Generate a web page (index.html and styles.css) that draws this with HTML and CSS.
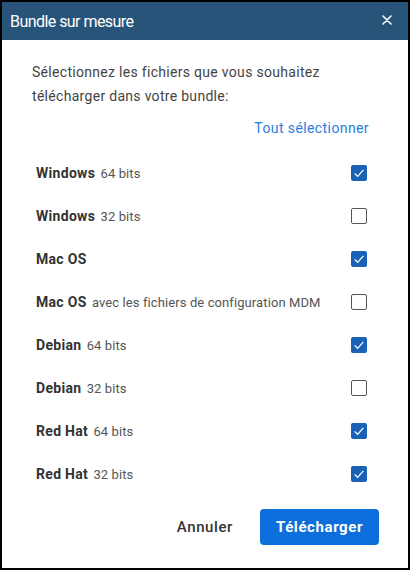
FILE: index.html
```html
<!DOCTYPE html>
<html lang="fr">
<head>
<meta charset="utf-8">
<title>Bundle sur mesure</title>
<link rel="stylesheet" href="styles.css">
</head>
<body>
<div class="dialog">
  <div class="header">
    <span class="title">Bundle sur mesure</span>
    <svg class="close" width="10" height="10" viewBox="0 0 10 10"><path d="M1 1 L9 9 M9 1 L1 9" stroke="#fff" stroke-width="1.6" stroke-linecap="round"/></svg>
  </div>
  <div class="content">
    <p class="intro">Sélectionnez les fichiers que vous souhaitez télécharger dans votre bundle:</p>
    <div class="select-all"><span class="link">Tout sélectionner</span></div>
    <ul class="list">
      <li class="row"><span class="label"><b>Windows</b> 64 bits</span><span class="box checked"><svg viewBox="0 0 16 16" width="16" height="16"><path d="M3.6 8.4 L6.6 11.3 L12.4 4.8" fill="none" stroke="#fff" stroke-width="1.2"/></svg></span></li>
      <li class="row"><span class="label"><b>Windows</b> 32 bits</span><span class="box"></span></li>
      <li class="row"><span class="label"><b>Mac OS</b></span><span class="box checked"><svg viewBox="0 0 16 16" width="16" height="16"><path d="M3.6 8.4 L6.6 11.3 L12.4 4.8" fill="none" stroke="#fff" stroke-width="1.2"/></svg></span></li>
      <li class="row"><span class="label"><b>Mac OS</b> avec les fichiers de configuration MDM</span><span class="box"></span></li>
      <li class="row"><span class="label"><b>Debian</b> 64 bits</span><span class="box checked"><svg viewBox="0 0 16 16" width="16" height="16"><path d="M3.6 8.4 L6.6 11.3 L12.4 4.8" fill="none" stroke="#fff" stroke-width="1.2"/></svg></span></li>
      <li class="row"><span class="label"><b>Debian</b> 32 bits</span><span class="box"></span></li>
      <li class="row"><span class="label"><b>Red Hat</b> 64 bits</span><span class="box checked"><svg viewBox="0 0 16 16" width="16" height="16"><path d="M3.6 8.4 L6.6 11.3 L12.4 4.8" fill="none" stroke="#fff" stroke-width="1.2"/></svg></span></li>
      <li class="row"><span class="label"><b>Red Hat</b> 32 bits</span><span class="box checked"><svg viewBox="0 0 16 16" width="16" height="16"><path d="M3.6 8.4 L6.6 11.3 L12.4 4.8" fill="none" stroke="#fff" stroke-width="1.2"/></svg></span></li>
    </ul>
    <div class="actions">
      <button class="btn cancel">Annuler</button>
      <button class="btn primary">Télécharger</button>
    </div>
  </div>
</div>
</body>
</html>
```
FILE: styles.css
```css
html, body {
  margin: 0;
  padding: 0;
  background: #000;
}
body {
  padding: 2px;
  font-family: Roboto, "Liberation Sans", Arial, sans-serif;
}
.dialog {
  width: 406px;
  height: 566px;
  background: #fff;
  display: flex;
  flex-direction: column;
}
.header {
  height: 38px;
  background: #28547a;
  display: flex;
  align-items: center;
  justify-content: space-between;
  padding: 0 16px 0 8px;
}
.title {
  color: #fff;
  font-size: 16px;
  letter-spacing: -0.55px;
}
.close {
  display: block;
  margin-top: -2px;
}
.content {
  padding: 20px 41px 0 30px;
}
.intro {
  margin: 0;
  font-size: 14px;
  line-height: 24px;
  color: #444;
  letter-spacing: 0.3px;
}
.select-all {
  display: flex;
  justify-content: flex-end;
  margin-top: 8px;
  margin-right: -2px;
}
.link {
  color: #2a7de0;
  font-size: 14px;
  line-height: 24px;
  letter-spacing: 0.4px;
}
.list {
  list-style: none;
  margin: 11px 0 0 0;
  padding: 0 0 0 4px;
}
.row {
  height: 43px;
  display: flex;
  align-items: center;
  justify-content: space-between;
}
.label {
  font-size: 13px;
  color: #555;
  letter-spacing: 0.1px;
}
.label b {
  font-size: 14px;
  font-weight: 700;
  color: #333;
  margin-right: 2px;
  letter-spacing: 0.3px;
}
.box {
  width: 16px;
  height: 16px;
  box-sizing: border-box;
  border: 1.5px solid #555;
  border-radius: 2px;
  display: block;
}
.box.checked {
  border: none;
  background: #1a62b6;
}
.box svg {
  display: block;
}
.actions {
  display: flex;
  justify-content: flex-end;
  align-items: center;
  gap: 27px;
  margin-top: 14px;
  margin-right: -12px;
}
.btn {
  font-family: Roboto, "Liberation Sans", Arial, sans-serif;
  font-size: 15px;
  border: none;
  cursor: pointer;
  letter-spacing: 0.6px;
}
.cancel {
  background: none;
  color: #333;
  font-weight: 500;
  padding: 0;
}
.primary {
  background: #0c6fdb;
  color: #fff;
  font-weight: 700;
  height: 36px;
  width: 119px;
  border-radius: 4px;
}
```
